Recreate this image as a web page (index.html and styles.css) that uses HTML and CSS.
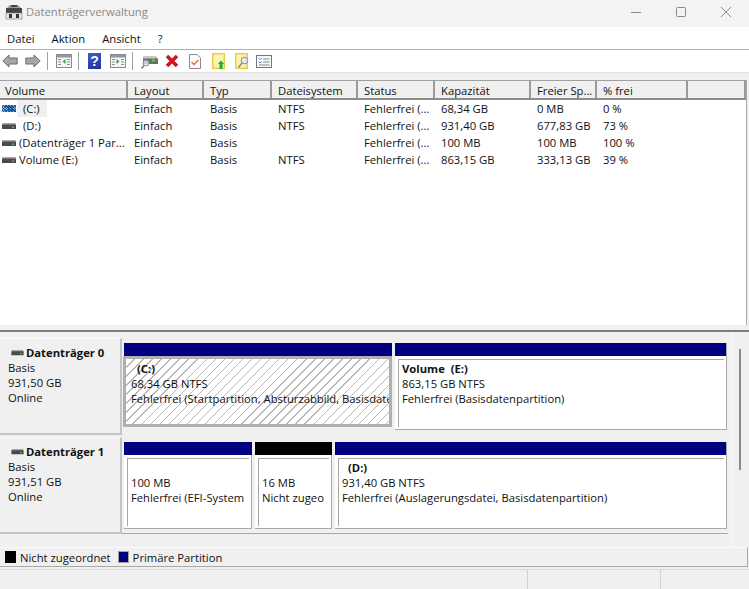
FILE: index.html
```html
<!DOCTYPE html>
<html lang="de">
<head>
<meta charset="utf-8">
<title>Datenträgerverwaltung</title>
<link rel="stylesheet" href="styles.css">
</head>
<body>
<svg width="0" height="0" class="defs">
  <defs>
    <symbol id="drive" viewBox="0 0 14 8">
      <path d="M1 1h12l1 2v4H0V3z" fill="#4a4a4a"/>
      <path d="M1 1h12l.6 1.500H.4z" fill="#a8a8a8"/>
      <rect x="10" y="4.500" width="2" height="1.400" fill="#3fd04a"/>
    </symbol>
    <symbol id="winframe" viewBox="0 0 16 14">
      <rect x=".5" y=".5" width="15" height="13" fill="#f6f6f6" stroke="#8a8a8a"/>
      <rect x="1" y="1" width="14" height="2.500" fill="#8f98a4"/>
      <path d="M2 5.500h3M2 8h3M2 10.500h3M11 5.500h3M11 8h3M11 10.500h3" stroke="#8093a8"/>
    </symbol>
  </defs>
</svg>
<div class="window">
  <header class="titlebar">
    <svg class="appicon" width="18" height="16" viewBox="0 0 18 16">
      <path d="M5 1h8l3 3H2z" fill="#9a9a9a"/>
      <rect x="6" y="1" width="6" height="2" fill="#444"/>
      <rect x="1" y="4" width="16" height="5" fill="#454545"/>
      <rect x="1" y="9" width="16" height="6" fill="#e8e8e8" stroke="#777" stroke-width=".6"/>
      <rect x="4" y="10" width="3" height="4" fill="#333"/>
      <rect x="11" y="10" width="3" height="4" fill="#333"/>
    </svg>
    <span class="apptitle">Datenträgerverwaltung</span>
    <div class="winbtns">
      <svg width="12" height="12" viewBox="0 0 12 12"><path d="M1 6.500h10" stroke="#8a8a8a"/></svg>
      <svg width="12" height="12" viewBox="0 0 12 12"><rect x="1.500" y="1.500" width="9" height="9" rx="1" fill="none" stroke="#8a8a8a"/></svg>
      <svg width="12" height="12" viewBox="0 0 12 12"><path d="M1 1l10 10M11 1L1 11" stroke="#8a8a8a"/></svg>
    </div>
  </header>

  <nav class="menubar">
    <span>Datei</span><span>Aktion</span><span>Ansicht</span><span>?</span>
  </nav>

  <div class="toolbar">
    <svg class="t-back" width="16" height="14" viewBox="0 0 16 14"><path d="M.8 7L7 1v3h8.200v6H7v3z" fill="#a6a6a6" stroke="#6f6f6f"/></svg>
    <svg class="t-fwd" width="16" height="14" viewBox="0 0 16 14"><path d="M15.200 7L9 1v3H.8v6H9v3z" fill="#a6a6a6" stroke="#6f6f6f"/></svg>
    <i class="sep"></i>
    <svg class="t-win" width="16" height="14" viewBox="0 0 16 14"><use href="#winframe"/><path d="M9.500 5v5L6.500 7.500z" fill="#2fae3c"/></svg>
    <i class="sep s2"></i>
    <span class="helpicon">?</span>
    <svg class="t-win" width="16" height="14" viewBox="0 0 16 14"><use href="#winframe"/><path d="M6.500 5v5l3-2.500z" fill="#2fae3c"/></svg>
    <i class="sep"></i>
    <svg class="t-scan" width="17" height="15" viewBox="0 0 17 15">
      <path d="M2 2h12l3 3v5H2z" fill="#6d6d6d"/><path d="M2 2h12l1.500 2.500H2z" fill="#c8c8c8"/>
      <rect x="11" y="5.500" width="3" height="2" fill="#42e04e"/>
      <circle cx="5" cy="9" r="3" fill="#cfe3f2" fill-opacity=".8" stroke="#8a8a8a"/>
      <path d="M3 11.500L.5 14.500" stroke="#777" stroke-width="1.500"/>
    </svg>
    <svg class="t-x" width="14" height="14" viewBox="0 0 14 14"><path d="M2 2l10 10M12 2L2 12" stroke="#d3121c" stroke-width="3.400"/></svg>
    <svg class="t-doc" width="12" height="15" viewBox="0 0 12 15"><path d="M.5.5h7.500l3.500 3.500v10.500H.5z" fill="#fbfbfb" stroke="#8c8c8c"/><path d="M2.500 8l2.500 2.500L9.500 6" fill="none" stroke="#e8662c" stroke-width="1.300"/></svg>
    <svg class="t-up" width="13" height="16" viewBox="0 0 13 16"><rect x=".7" y=".7" width="11.600" height="14.600" fill="#fdf3b0" stroke="#ecc94b" stroke-width="1.400"/><path d="M9 7.500l-3.200 3.500h1.700v5h3v-5h1.700z" fill="#17b52e"/></svg>
    <svg class="t-find" width="14" height="16" viewBox="0 0 14 16"><rect x=".7" y=".7" width="11.600" height="14.600" fill="#fdf3b0" stroke="#ecc94b" stroke-width="1.400"/><circle cx="9.500" cy="7.500" r="3.300" fill="#dbe9f3" stroke="#8b8b8b"/><path d="M7 10L3.500 14.500" stroke="#8b8b8b" stroke-width="1.500"/></svg>
    <svg class="t-list" width="16" height="13" viewBox="0 0 16 13"><rect x=".5" y=".5" width="15" height="12" fill="#f8f8f8" stroke="#777"/><path d="M3 3.500l1 1L5.500 3M3 7l1 1 1.500-1.500" fill="none" stroke="#2c78d0"/><path d="M7 4h6.500M7 7h6.500M3 10h10.500" stroke="#8a8a8a"/></svg>
  </div>

  <div class="band"></div>

  <section class="volumes">
    <div class="row head">
      <div class="cell">Volume</div><div class="cell">Layout</div><div class="cell">Typ</div><div class="cell">Dateisystem</div><div class="cell">Status</div><div class="cell">Kapazität</div><div class="cell">Freier Sp...</div><div class="cell">% frei</div><div class="cell"></div>
    </div>
    <div class="row">
      <div class="cell vol"><span class="stripe"></span><span class="sel">(C:)</span></div><div class="cell">Einfach</div><div class="cell">Basis</div><div class="cell">NTFS</div><div class="cell">Fehlerfrei (...</div><div class="cell">68,34 GB</div><div class="cell">0 MB</div><div class="cell">0 %</div>
    </div>
    <div class="row">
      <div class="cell vol"><svg class="dr"><use href="#drive"/></svg><span class="sel plain">(D:)</span></div><div class="cell">Einfach</div><div class="cell">Basis</div><div class="cell">NTFS</div><div class="cell">Fehlerfrei (...</div><div class="cell">931,40 GB</div><div class="cell">677,83 GB</div><div class="cell">73 %</div>
    </div>
    <div class="row">
      <div class="cell vol"><svg class="dr"><use href="#drive"/></svg><span class="tight">(Datenträger 1 Par...</span></div><div class="cell">Einfach</div><div class="cell">Basis</div><div class="cell"></div><div class="cell">Fehlerfrei (...</div><div class="cell">100 MB</div><div class="cell">100 MB</div><div class="cell">100 %</div>
    </div>
    <div class="row">
      <div class="cell vol"><svg class="dr"><use href="#drive"/></svg><span class="tight">Volume (E:)</span></div><div class="cell">Einfach</div><div class="cell">Basis</div><div class="cell">NTFS</div><div class="cell">Fehlerfrei (...</div><div class="cell">863,15 GB</div><div class="cell">333,13 GB</div><div class="cell">39 %</div>
    </div>
  </section>

  <div class="splitter"></div>

  <section class="lower">
    <div class="disks">
      <article class="disk">
        <div class="label">
          <div class="label-name"><svg class="dr small"><use href="#drive"/></svg><b>Datenträger 0</b></div>
          <div>Basis</div><div>931,50 GB</div><div>Online</div>
        </div>
        <div class="parts first">
          <div class="part w-c">
            <div class="bar"></div>
            <div class="box selected"><div class="clip">
              <b class="pname">(C:)</b><div>68,34 GB NTFS</div><div>Fehlerfrei (Startpartition, Absturzabbild, Basisdatenpartition)</div>
            </div></div>
          </div>
          <div class="part w-e">
            <div class="bar"></div>
            <div class="box"><div class="clip">
              <b>Volume&nbsp; (E:)</b><div>863,15 GB NTFS</div><div>Fehlerfrei (Basisdatenpartition)</div>
            </div></div>
          </div>
        </div>
      </article>
      <article class="disk">
        <div class="label">
          <div class="label-name"><svg class="dr small"><use href="#drive"/></svg><b>Datenträger 1</b></div>
          <div>Basis</div><div>931,51 GB</div><div>Online</div>
        </div>
        <div class="parts">
          <div class="part w-efi">
            <div class="bar"></div>
            <div class="box"><div class="clip">
              <div>&nbsp;</div><div>100 MB</div><div>Fehlerfrei (EFI-System</div>
            </div></div>
          </div>
          <div class="part w-un">
            <div class="bar black"></div>
            <div class="box"><div class="clip">
              <div>&nbsp;</div><div>16 MB</div><div>Nicht zugeo</div>
            </div></div>
          </div>
          <div class="part w-d">
            <div class="bar"></div>
            <div class="box"><div class="clip">
              <b class="pname">(D:)</b><div>931,40 GB NTFS</div><div>Fehlerfrei (Auslagerungsdatei, Basisdatenpartition)</div>
            </div></div>
          </div>
        </div>
      </article>
    </div>
    <div class="scrollbar"><i class="thumb"></i></div>
  </section>

  <footer class="legend">
    <i class="swatch black"></i><span class="lg-a">Nicht zugeordnet</span>
    <i class="swatch navy"></i><span>Primäre Partition</span>
  </footer>
  <div class="status"><i></i><i></i><i></i></div>
</div>
</body>
</html>
```

FILE: styles.css
```css
* { box-sizing: border-box; }
html, body { margin: 0; padding: 0; }
body {
  width: 749px;
  height: 589px;
  overflow: hidden;
  background: #f0f0f0;
  color: #111;
  font-family: "Open Sans", "Noto Sans", "Liberation Sans", sans-serif;
  font-size: 11.25px;
  line-height: 15px;
}
.defs { position: absolute; }
.window { display: flex; flex-direction: column; width: 749px; height: 589px; }

.titlebar {
  height: 27px;
  flex: none;
  display: flex;
  align-items: center;
  background: #f3f3f3;
  padding: 0 0 4px 5px;
}
.appicon { margin-right: 3px; }
.apptitle { color: #8a8a8a; }
.winbtns {
  margin-left: auto;
  margin-right: 17px;
  display: flex;
  gap: 33px;
}

.menubar {
  height: 23px;
  flex: none;
  display: flex;
  align-items: center;
  background: #fff;
  border-bottom: 1px solid #b0b0b0;
  padding-left: 7px;
  gap: 17px;
}

.toolbar {
  height: 22px;
  flex: none;
  display: flex;
  align-items: center;
  background: #fff;
  padding-left: 2px;
}
.toolbar svg { flex: none; }
.t-back { margin-right: 7px; }
.t-fwd { margin-right: 6px; }
.t-win { margin-right: 6px; }
.t-scan { margin-right: 7px; }
.t-x { margin-right: 10px; }
.t-doc { margin-right: 11px; }
.t-up { margin-right: 10px; }
.t-find { margin-right: 7px; }
.sep { width: 1px; height: 18px; background: #a0a0a0; margin-right: 8px; flex: none; }
.sep.s2 { margin-right: 9px; }
.helpicon {
  width: 13px;
  height: 16px;
  flex: none;
  margin-right: 9px;
  background: linear-gradient(160deg, #3e5fd0, #1f2f96);
  color: #fff;
  font: bold 14px/16px "Liberation Sans", sans-serif;
  text-align: center;
}

.band { height: 8px; flex: none; background: #f0f0f0; border-top: 1px solid #e2e2e2; }

.volumes {
  height: 245px;
  flex: none;
  background: #fff;
  border-top: 1px solid #a0a0a0;
  border-right: 1px solid #a8a8a8;
  margin-right: 2px;
  margin-bottom: 5px;
}
.row {
  display: grid;
  grid-template-columns: 128px 76px 68px 86px 77px 96px 66px 91px 1fr;
  height: 17px;
  line-height: 17px;
}
.row .cell { padding-left: 6px; white-space: nowrap; overflow: hidden; }
.row.head {
  height: 19px;
  line-height: 19px;
  background: #f0f0f0;
  border-bottom: 2px solid #8c8c8c;
}
.head .cell { border-right: 2px solid #9a9a9a; }
.head .cell:first-child { padding-left: 5px; }
.row .vol { display: flex; align-items: center; padding-left: 2px; }
.dr { width: 14px; height: 8px; flex: none; }
.dr.small { width: 13px; height: 7px; margin-right: 2px; }
.stripe {
  width: 14px;
  height: 7px;
  flex: none;
  background:
    repeating-linear-gradient(45deg, transparent 0 1px, #0e4c92 1px 2px),
    repeating-linear-gradient(135deg, #8db8dc 0 1px, #2f6cb0 1px 2px);
}
.sel { background: #f0f0f0; width: 30px; margin-left: 1px; padding-left: 6px; }
.sel.plain { background: none; }
.tight { margin-left: 3px; }

.splitter { height: 2px; flex: none; background: #7d7d7d; }

.lower { flex: 1; display: flex; min-height: 0; }
.disks { width: 731px; flex: none; padding-top: 6px; }
.disk { display: flex; height: 99px; }
.label {
  width: 122px;
  height: 97px;
  flex: none;
  padding: 6px 0 0 8px;
  background: #f0f0f0;
  border-right: 2px solid #c4c4c4;
  border-bottom: 2px solid #c4c4c4;
  border-top: 1px solid #fafafa;
}
.label-name { display: flex; align-items: center; height: 15px; margin-left: 3px; }
.parts {
  width: 606px;
  height: 97px;
  flex: none;
  display: flex;
  gap: 3px;
  padding: 5px 0 0 2px;
  border-bottom: 1px solid #a8a8a8;
}
.parts.first { border-bottom: 0; }
.part { display: flex; flex-direction: column; }
.w-c { width: 268px; }
.w-e { width: 332px; }
.w-efi { width: 128px; }
.w-un { width: 77px; }
.w-d { width: 392px; }
.bar { height: 13px; flex: none; background: #000080; }
.bar.black { background: #000; }
.w-e .bar, .w-d .bar { border-right: 1px solid #a8a8a8; }
.box {
  height: 74px;
  padding: 3px 2px 2px 3px;
  background: #fff;
  border-right: 1px solid #a8a8a8;
  border-bottom: 1px solid #a8a8a8;
}
.clip {
  height: 100%;
  padding: 1px 0 0 3px;
  border-top: 1px solid #a8a8a8;
  border-left: 1px solid #a8a8a8;
  white-space: nowrap;
  overflow: hidden;
}
.clip b { display: block; }
.pname { padding-left: 6px; }
.box.selected { padding: 0; border: 3px solid #b0b0b0; margin-left: -1px; height: 71px; }
.box.selected .clip {
  border: 0;
  padding: 2px 0 0 5px;
  background: repeating-linear-gradient(135deg, #fff 0 5.400px, #b8b8b8 5.400px 6.400px);
}

.scrollbar { flex: 1; border-left: 1px solid #fafafa; }
.thumb { display: block; width: 2px; height: 121px; margin: 17px 0 0 7px; background: #8a8a8a; }

.legend {
  height: 20px;
  flex: none;
  display: flex;
  align-items: center;
  margin: 0 1px 2px 0;
  padding-left: 5px;
  border-top: 1px solid #fafafa;
  border-bottom: 1px solid #a8a8a8;
  border-right: 1px solid #a8a8a8;
}
.swatch { width: 11px; height: 12px; flex: none; margin-right: 4px; }
.swatch.black { background: #000; }
.swatch.navy { background: #000080; border: 1px solid #a0a0a0; }
.lg-a { margin-right: 7px; }

.status {
  height: 20px;
  flex: none;
  display: flex;
  border-top: 1px solid #d8d8d8;
}
.status i { border-right: 1px solid #d4d4d4; width: 133px; }
.status i:first-child { width: 528px; }
.status i:last-child { width: 87px; border-right: 0; }
```
